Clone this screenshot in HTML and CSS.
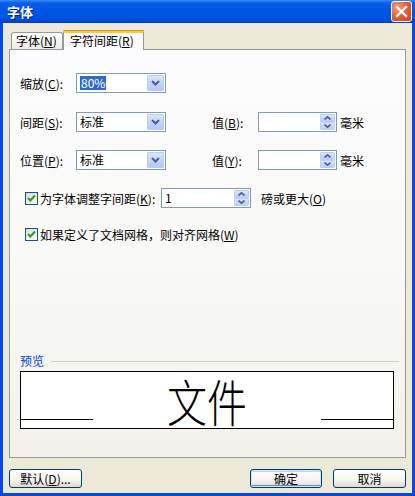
FILE: index.html
```html
<!DOCTYPE html>
<html lang="zh">
<head>
<meta charset="utf-8">
<title>字体</title>
<link rel="stylesheet" href="styles.css">
</head>
<body>
<div class="window">
  <div class="titlebar">
    <span class="title">字体</span>
    <span class="close">
      <svg width="13" height="13" viewBox="0 0 13 13"><path d="M2 2 L11 11 M11 2 L2 11" stroke="#fff" stroke-width="2.2" stroke-linecap="square"/></svg>
    </span>
  </div>
  <div class="frame">
    <div class="tabs">
      <div class="tab">字体(<u>N</u>)</div>
      <div class="tab active">字符间距(<u>R</u>)</div>
    </div>
    <div class="panel">
      <div class="row r1">
        <span class="lbl">缩放(<u>C</u>):</span>
        <div class="combo"><span class="cval"><span class="sel">80%</span></span><span class="drop"><svg width="9" height="6" viewBox="0 0 9 6"><path d="M1 1 L4.5 4.5 L8 1" fill="none" stroke="#4D6185" stroke-width="2"/></svg></span></div>
      </div>
      <div class="row r2">
        <span class="lbl">间距(<u>S</u>):</span>
        <div class="combo"><span class="cval">标准</span><span class="drop"><svg width="9" height="6" viewBox="0 0 9 6"><path d="M1 1 L4.5 4.5 L8 1" fill="none" stroke="#4D6185" stroke-width="2"/></svg></span></div>
        <span class="lbl2">值(<u>B</u>):</span>
        <div class="spin"><span class="sval"></span><span class="sbtns"><span class="sb"><svg width="7" height="4" viewBox="0 0 7 4"><path d="M0.5 3.5 L3.5 0.8 L6.5 3.5" fill="none" stroke="#4D6185" stroke-width="1.6"/></svg></span><span class="sb"><svg width="7" height="4" viewBox="0 0 7 4"><path d="M0.5 0.5 L3.5 3.2 L6.5 0.5" fill="none" stroke="#4D6185" stroke-width="1.6"/></svg></span></span></div>
        <span class="unit">毫米</span>
      </div>
      <div class="row r3">
        <span class="lbl">位置(<u>P</u>):</span>
        <div class="combo"><span class="cval">标准</span><span class="drop"><svg width="9" height="6" viewBox="0 0 9 6"><path d="M1 1 L4.5 4.5 L8 1" fill="none" stroke="#4D6185" stroke-width="2"/></svg></span></div>
        <span class="lbl2">值(<u>Y</u>):</span>
        <div class="spin"><span class="sval"></span><span class="sbtns"><span class="sb"><svg width="7" height="4" viewBox="0 0 7 4"><path d="M0.5 3.5 L3.5 0.8 L6.5 3.5" fill="none" stroke="#4D6185" stroke-width="1.6"/></svg></span><span class="sb"><svg width="7" height="4" viewBox="0 0 7 4"><path d="M0.5 0.5 L3.5 3.2 L6.5 0.5" fill="none" stroke="#4D6185" stroke-width="1.6"/></svg></span></span></div>
        <span class="unit">毫米</span>
      </div>
      <div class="row r4">
        <span class="check"><svg width="11" height="11" viewBox="0 0 11 11"><path d="M2 5 L4.3 7.5 L9 2.5" fill="none" stroke="#21A121" stroke-width="2"/></svg></span>
        <span class="clbl">为字体调整字间距(<u>K</u>):</span>
        <div class="spin wide"><span class="sval">1</span><span class="sbtns"><span class="sb"><svg width="7" height="4" viewBox="0 0 7 4"><path d="M0.5 3.5 L3.5 0.8 L6.5 3.5" fill="none" stroke="#4D6185" stroke-width="1.6"/></svg></span><span class="sb"><svg width="7" height="4" viewBox="0 0 7 4"><path d="M0.5 0.5 L3.5 3.2 L6.5 0.5" fill="none" stroke="#4D6185" stroke-width="1.6"/></svg></span></span></div>
        <span class="after">磅或更大(<u>O</u>)</span>
      </div>
      <div class="row r5">
        <span class="check"><svg width="11" height="11" viewBox="0 0 11 11"><path d="M2 5 L4.3 7.5 L9 2.5" fill="none" stroke="#21A121" stroke-width="2"/></svg></span>
        <span class="clbl2">如果定义了文档网格，则对齐网格(<u>W</u>)</span>
      </div>
      <div class="preview">
        <div class="legend"><span class="ltext">预览</span><span class="lline"></span></div>
        <div class="pbox">
          <span class="pline"></span>
          <span class="ptext"><span class="pinner">文件</span></span>
          <span class="pline"></span>
        </div>
      </div>
    </div>
    <div class="buttons">
      <button class="btn">默认(<u>D</u>)...</button>
      <span class="spacer"></span>
      <button class="btn default">确定</button>
      <button class="btn">取消</button>
    </div>
  </div>
</div>
</body>
</html>
```
FILE: styles.css
```css
* { box-sizing: border-box; }
html, body { margin: 0; padding: 0; background: #ECE9D8; }
body {
  font-family: "Noto Sans CJK SC", "Liberation Sans", sans-serif;
  font-size: 12px;
  color: #000;
}
u { text-decoration: underline; text-underline-offset: 1px; }

.window {
  width: 415px;
  height: 496px;
  display: flex;
  flex-direction: column;
}

.titlebar {
  height: 23px;
  display: flex;
  align-items: center;
  justify-content: space-between;
  padding: 0 3px 0 7px;
  background: linear-gradient(to bottom, #3C8CF8 0%, #0A5EEC 12%, #0055E5 45%, #0053E2 80%, #0046D0 92%, #003CC2 100%);
}
.title {
  color: #fff;
  font-weight: bold;
  font-size: 13px;
  line-height: 16px;
  text-shadow: 1px 1px 0 #0A1E7A;
}
.close {
  width: 21px;
  height: 21px;
  border: 1px solid #fff;
  border-radius: 3px;
  background: radial-gradient(circle at 30% 30%, #F0A080 0%, #E3643F 45%, #C63E17 100%);
  display: flex;
  align-items: center;
  justify-content: center;
}

.frame {
  flex: 1;
  border-left: 3px solid #0A48DA;
  border-right: 3px solid #0A48DA;
  border-bottom: 3px solid #0A48DA;
  padding: 7px 6px 5px 6px;
  display: flex;
  flex-direction: column;
}

.tabs {
  height: 19px;
  display: flex;
  align-items: flex-end;
  padding-left: 2px;
  position: relative;
  z-index: 1;
}
.tab {
  height: 17px;
  width: 52px;
  border: 1px solid #919B9C;
  border-bottom: none;
  border-radius: 3px 3px 0 0;
  background: linear-gradient(to bottom, #FFFFFF, #ECEBE6);
  line-height: 15px;
  padding-left: 4px;
  white-space: nowrap;
}
.tab.active {
  height: 20px;
  width: 81px;
  margin-bottom: -1px;
  background: #FCFCFE;
  border-top: 3px solid #FFC83C;
  box-shadow: inset 0 0 0 0 transparent;
  position: relative;
  padding-left: 6px;
  line-height: 15px;
}
.tab.active::before {
  content: "";
  position: absolute;
  left: -1px;
  right: -1px;
  top: -3px;
  height: 1px;
  background: #E68B2C;
  border-radius: 3px 3px 0 0;
}

.panel {
  height: 409px;
  border: 1px solid #919B9C;
  background: linear-gradient(to bottom, #FCFCFE 0%, #F9F9F7 50%, #F2F1EC 100%);
  display: flex;
  flex-direction: column;
  padding-left: 10px;
}

.row {
  height: 20px;
  display: flex;
  align-items: center;
  white-space: nowrap;
}
.r1 { margin-top: 23px; }
.r2 { margin-top: 19px; }
.r3 { margin-top: 18px; }
.r4 { margin-top: 18px; }
.r5 { margin-top: 16px; }

.lbl { width: 56px; }
.lbl2 { margin-left: 46px; width: 46px; }
.unit { margin-left: 3px; }

.combo {
  width: 90px;
  height: 20px;
  border: 1px solid #7F9DB9;
  background: #fff;
  display: flex;
  align-items: center;
  padding: 1px;
}
.cval {
  flex: 1;
  padding-left: 2px;
  line-height: 16px;
}
.sel {
  background: #316AC5;
  color: #fff;
  padding: 0 1px;
  display: inline-block;
  line-height: 14px;
}
.drop {
  width: 17px;
  height: 16px;
  border: 1px solid #BACDF6;
  border-radius: 1px;
  background: linear-gradient(to bottom, #DCE6FD 0%, #C5D5FC 50%, #B4C8F7 100%);
  display: flex;
  align-items: center;
  justify-content: center;
}

.spin {
  width: 79px;
  height: 20px;
  border: 1px solid #7F9DB9;
  background: #fff;
  display: flex;
  padding: 1px;
}
.spin.wide { width: 90px; }
.sval {
  flex: 1;
  padding-left: 2px;
  line-height: 16px;
}
.sbtns {
  width: 15px;
  display: flex;
  flex-direction: column;
}
.sb {
  flex: 1;
  border: 1px solid #BACDF6;
  border-radius: 1px;
  background: linear-gradient(to bottom, #DCE6FD, #B9CCF8);
  display: flex;
  align-items: center;
  justify-content: center;
}

.check {
  width: 13px;
  height: 13px;
  margin-left: 5px;
  border: 1px solid #1C5180;
  background: linear-gradient(135deg, #DCDCD7, #FFFFFF);
  display: flex;
  align-items: center;
  justify-content: center;
}
.clbl { margin-left: 2px; width: 121px; }
.clbl2 { margin-left: 2px; }
.after { margin-left: 10px; }

.preview {
  margin-top: auto;
  margin-bottom: 28px;
  padding-right: 11px;
}
.legend {
  display: flex;
  align-items: center;
  height: 14px;
  margin-right: -5px;
}
.ltext { color: #0046D5; line-height: 14px; }
.lline {
  flex: 1;
  height: 1px;
  background: #D0D0BF;
  margin-left: 7px;
}
.pbox {
  margin-top: 3px;
  height: 58px;
  border: 1px solid #000;
  background: #fff;
  display: flex;
  align-items: flex-end;
}
.pline {
  width: 72px;
  height: 9px;
  border-top: 1px solid #000;
}
.ptext {
  flex: 1;
  text-align: center;
  height: 56px;
  overflow: visible;
}
.pinner {
  display: inline-block;
  font-size: 50px;
  font-weight: 300;
  line-height: 56px;
  transform: scaleX(0.8);
  letter-spacing: 0;
}

.buttons {
  margin-top: 11px;
  display: flex;
  height: 19px;
}
.spacer { flex: 1; }
.btn {
  width: 73px;
  height: 19px;
  border: 1px solid #003C74;
  border-radius: 3px;
  background: linear-gradient(to bottom, #FFFFFF 0%, #F4F4F0 60%, #DCD8CC 100%);
  font-family: inherit;
  font-size: 12px;
  color: #000;
  padding: 0;
  line-height: 15px;
}
.btn.default {
  width: 72px;
  margin-right: 11px;
  box-shadow: inset 0 0 0 1px #CEE7FF, inset 0 -1px 0 1px #6982EE, inset 0 1px 0 1px #BCD4F6;
}
```
